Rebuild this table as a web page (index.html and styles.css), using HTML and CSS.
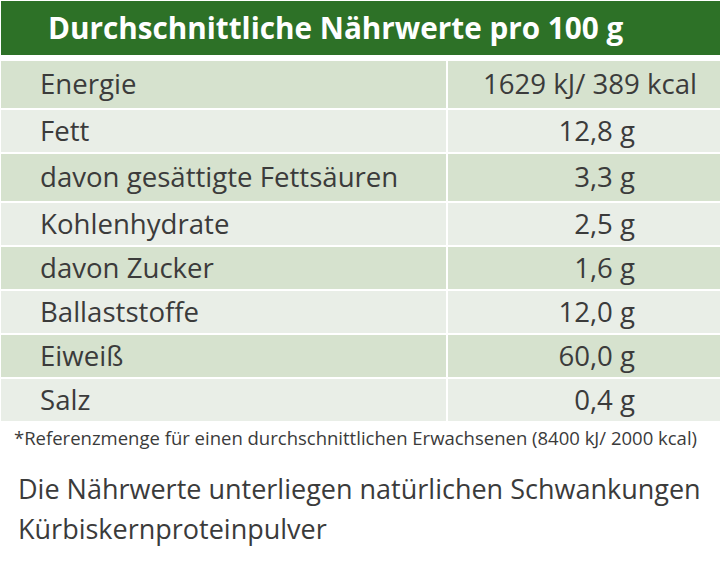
FILE: index.html
```html
<!DOCTYPE html>
<html lang="de">
<head>
<meta charset="utf-8">
<title>Nährwerte</title>
<link rel="stylesheet" href="styles.css">
</head>
<body>
<div class="panel">
  <div class="title">Durchschnittliche Nährwerte pro 100 g</div>
  <div class="table">
    <div class="row dark tall"><div class="name">Energie</div><div class="val wide">1629 kJ/ 389 kcal</div></div>
    <div class="row light"><div class="name">Fett</div><div class="val">12,8 g</div></div>
    <div class="row dark tall"><div class="name">davon gesättigte Fettsäuren</div><div class="val">3,3 g</div></div>
    <div class="row light"><div class="name">Kohlenhydrate</div><div class="val">2,5 g</div></div>
    <div class="row dark"><div class="name">davon Zucker</div><div class="val">1,6 g</div></div>
    <div class="row light"><div class="name">Ballaststoffe</div><div class="val">12,0 g</div></div>
    <div class="row dark"><div class="name">Eiweiß</div><div class="val">60,0 g</div></div>
    <div class="row light"><div class="name">Salz</div><div class="val">0,4 g</div></div>
  </div>
  <p class="note">*Referenzmenge für einen durchschnittlichen Erwachsenen (8400 kJ/ 2000 kcal)</p>
  <p class="info">Die Nährwerte unterliegen natürlichen Schwankungen<br>Kürbiskernproteinpulver</p>
</div>
</body>
</html>
```
FILE: styles.css
```css
html, body {
  margin: 0;
  background: #ffffff;
}
body {
  font-family: "Open Sans", "Noto Sans", sans-serif;
  color: #3b3b3b;
}
.panel {
  padding: 1px 1px 0 1px;
}
.title {
  height: 54px;
  background: #2d7127;
  color: #ffffff;
  font-weight: bold;
  font-size: 29.7px;
  line-height: 54px;
  padding-left: 47px;
}
.table {
  margin-top: 6px;
  display: flex;
  flex-direction: column;
  gap: 2px;
}
.row {
  display: grid;
  grid-template-columns: 445px 1fr;
  column-gap: 2px;
  height: 42px;
}
.row.tall {
  height: 47px;
}
.row.dark > div { background: #d6e2ce; }
.row.light > div { background: #e9eee7; }
.name, .val {
  font-size: 27.6px;
  display: flex;
  align-items: center;
  padding-bottom: 3px;
  box-sizing: border-box;
}
.name {
  padding-left: 39px;
}
.val {
  justify-content: flex-end;
  padding-right: 85px;
}
.val.wide {
  padding-right: 23px;
}
.note {
  margin: 6px 0 0 13px;
  font-size: 18.5px;
  line-height: 22px;
}
.info {
  margin: 20px 0 0 17px;
  font-size: 27px;
  line-height: 40px;
}
```
